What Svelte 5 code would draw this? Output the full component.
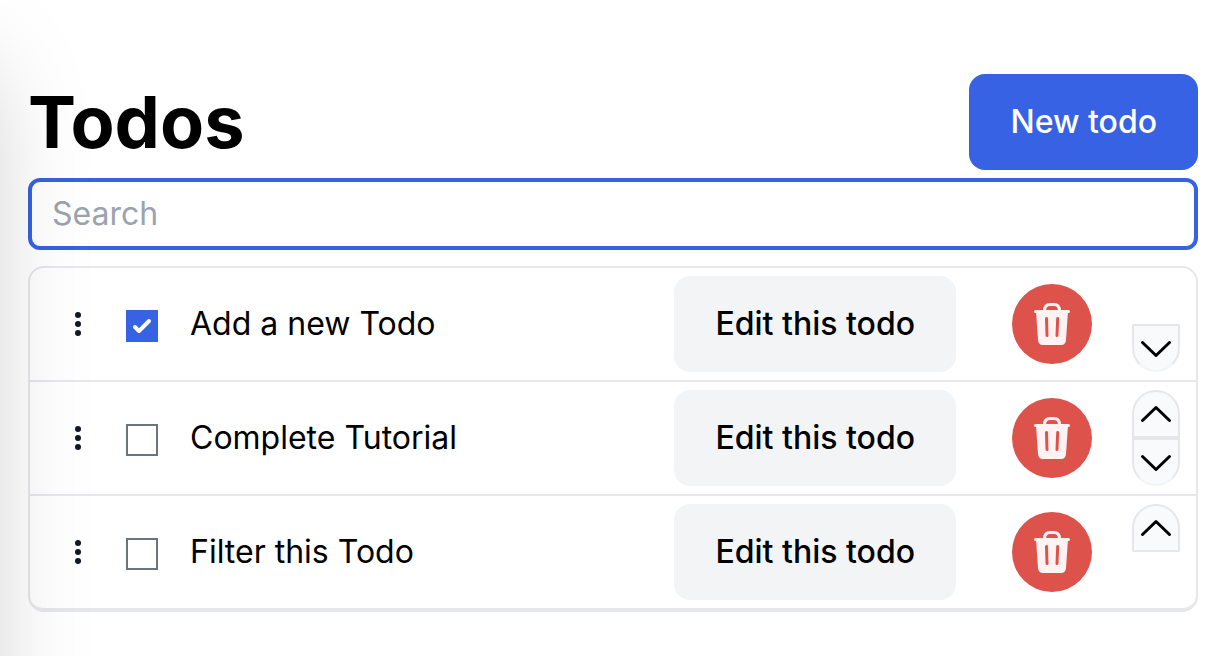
<script lang="ts">
  type Todo = { id: number; title: string; done: boolean };

  let todos = $state<Todo[]>([
    { id: 1, title: 'Add a new Todo', done: true },
    { id: 2, title: 'Complete Tutorial', done: false },
    { id: 3, title: 'Filter this Todo', done: false },
  ]);
  let search = $state('');

  const visible = $derived(
    todos.filter((todo) => todo.title.toLowerCase().includes(search.trim().toLowerCase()))
  );

  function add() {
    const id = Math.max(0, ...todos.map((todo) => todo.id)) + 1;
    todos.push({ id, title: 'New todo', done: false });
  }

  function edit(todo: Todo) {
    const title = window.prompt('Title', todo.title);
    if (title) todo.title = title;
  }

  function remove(id: number) {
    todos = todos.filter((todo) => todo.id !== id);
  }

  function move(id: number, step: number) {
    const from = todos.findIndex((todo) => todo.id === id);
    const [todo] = todos.splice(from, 1);
    todos.splice(from + step, 0, todo);
  }
</script>

<div class="drawer-edge" aria-hidden="true"></div>

<main>
  <header>
    <h1>Todos</h1>
    <button class="btn btn-primary" type="button" onclick={add}>New todo</button>
  </header>

  <input class="search" type="text" placeholder="Search" aria-label="Search" bind:value={search} />

  <ul>
    {#each visible as todo, i (todo.id)}
      <li>
        <svg class="handle" width="48" height="48" viewBox="0 0 48 48" aria-hidden="true">
          <circle cx="24" cy="15" r="3" />
          <circle cx="24" cy="24" r="3" />
          <circle cx="24" cy="33" r="3" />
        </svg>
        <input class="check" type="checkbox" id="todo-{todo.id}" bind:checked={todo.done} />
        <label for="todo-{todo.id}">{todo.title}</label>
        <button class="btn btn-secondary" type="button" onclick={() => edit(todo)}>Edit this todo</button>
        <button class="delete" type="button" aria-label="Delete {todo.title}" onclick={() => remove(todo.id)}>
          <svg width="48" height="48" viewBox="0 0 48 48" fill="none" stroke-linecap="round" stroke-linejoin="round">
            <path class="can" d="M8 11h32l-2 29q-.4 5-5 5H15q-4.600 0-5-5z" />
            <path class="line" d="M7.500 11.500h33M16.500 11q0-6.500 5.500-6.500h4q5.500 0 5.500 6.500" />
            <path class="slot" d="M18.500 18.500l.5 17M29.700 18.500l-.7 17" />
          </svg>
        </button>
        <div class="order">
          {#if i > 0}
            <button class="up" type="button" aria-label="Move {todo.title} up" onclick={() => move(todo.id, -1)}>
              <svg width="44" height="44" viewBox="0 0 44 44"><path d="M8.500 28.500L22 15.500l13.500 13" /></svg>
            </button>
          {/if}
          {#if i < visible.length - 1}
            <button class="down" type="button" aria-label="Move {todo.title} down" onclick={() => move(todo.id, 1)}>
              <svg width="44" height="44" viewBox="0 0 44 44"><path d="M8.500 16.500L22 29.500l13.500-13" /></svg>
            </button>
          {/if}
        </div>
      </li>
    {/each}
  </ul>
</main>

<style>
  :global(body) {
    margin: 0;
    background: #fff;
    color: #000;
    font-family: Inter, 'Liberation Sans', sans-serif;
    font-size: 32px;
    line-height: 48px;
  }

  /* The closed drawer sits just outside the window; only its shadow shows. */
  .drawer-edge {
    position: fixed;
    inset: 0 100% 0 auto;
    width: 400px;
    height: 200vh;
    box-shadow: 0 50px 100px -24px rgba(0, 0, 0, 0.25);
    pointer-events: none;
  }

  main {
    padding: 74px 34px 44px 28px;
  }

  header {
    display: flex;
    align-items: center;
    justify-content: space-between;
    margin-bottom: 8px;
  }

  h1 {
    margin: 0;
    font-size: 72px;
    font-weight: 700;
    line-height: 96px;
  }

  button {
    font: inherit;
    color: inherit;
    border: 0;
    padding: 0;
    cursor: pointer;
  }

  .btn {
    padding: 24px 41px;
    border-radius: 16px;
    font-weight: 500;
    white-space: nowrap;
  }

  .btn-primary {
    background: #3662e3;
    color: #fff;
  }

  .btn-secondary {
    background: #f3f4f6;
  }

  .search {
    display: block;
    box-sizing: border-box;
    width: 100%;
    height: 72px;
    padding: 8px 20px 10px;
    border: 4px solid #3662e3;
    border-radius: 12px;
    background: transparent;
    font: inherit;
    outline: none;
  }

  .search::placeholder {
    color: #9ca3af;
    opacity: 1;
  }

  ul {
    list-style: none;
    margin: 16px 0 0;
    padding: 0;
    border: 2px solid #e5e7eb;
    border-radius: 16px;
  }

  li {
    display: flex;
    align-items: center;
    padding: 8px 16px 8px 24px;
    border-bottom: 2px solid #e5e7eb;
  }

  li:last-child {
    border-radius: 0 0 14px 14px;
  }

  .handle {
    flex: none;
    margin-right: 24px;
    fill: #111827;
    cursor: grab;
  }

  .check {
    appearance: none;
    box-sizing: border-box;
    flex: none;
    width: 32px;
    height: 32px;
    margin: 4px 32px 0 0;
    border: 2px solid #6b7280;
    background: #fff;
  }

  .check:checked {
    border: 0;
    background: #3662e3 url("data:image/svg+xml,%3Csvg xmlns='http://www.w3.org/2000/svg' viewBox='0 0 16 16' fill='white'%3E%3Cpath d='M12.207 4.793a1 1 0 010 1.414l-5 5a1 1 0 01-1.414 0l-2-2a1 1 0 011.414-1.414L6.5 9.086l4.293-4.293a1 1 0 011.414 0z'/%3E%3C/svg%3E") center / 100% no-repeat;
  }

  label {
    flex: 1;
  }

  .delete {
    display: grid;
    place-items: center;
    flex: none;
    width: 80px;
    height: 80px;
    margin: 0 40px 0 56px;
    border-radius: 50%;
    background: #de524c;
  }

  .can {
    fill: #fef2f2;
  }

  .line {
    stroke: #fef2f2;
    stroke-width: 3;
  }

  .slot {
    stroke: #de524c;
    stroke-width: 3;
  }

  .order {
    display: flex;
    flex-direction: column;
    width: 48px;
    height: 96px;
  }

  .up,
  .down {
    display: grid;
    place-items: center;
    box-sizing: border-box;
    width: 48px;
    height: 48px;
    border: 2px solid #e5e7eb;
    background: #f9fafb;
  }

  .up {
    border-radius: 24px 24px 0 0;
  }

  .down {
    margin-top: auto;
    border-bottom-color: #f3f4f6;
    border-radius: 0 0 24px 24px;
  }

  .up path,
  .down path {
    fill: none;
    stroke: #000;
    stroke-width: 3;
    stroke-linecap: round;
    stroke-linejoin: round;
  }
</style>
